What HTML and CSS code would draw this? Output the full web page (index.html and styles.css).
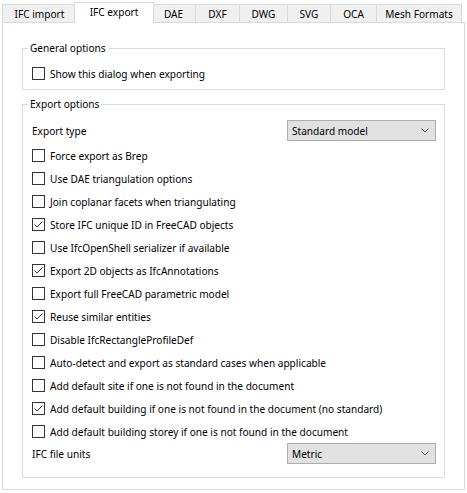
FILE: index.html
```html
<!DOCTYPE html>
<html>
<head>
<meta charset="utf-8">
<link rel="stylesheet" href="styles.css">
</head>
<body>
<div class="tabs">
  <div class="tab t-import">IFC import</div>
  <div class="tab t-export active">IFC export</div>
  <div class="tab t-dae">DAE</div>
  <div class="tab t-dxf">DXF</div>
  <div class="tab t-dwg">DWG</div>
  <div class="tab t-svg">SVG</div>
  <div class="tab t-oca">OCA</div>
  <div class="tab t-mesh">Mesh Formats</div>
</div>
<div class="panel">
  <fieldset class="group general">
    <legend>General options</legend>
    <label class="row"><span class="box"></span>Show this dialog when exporting</label>
  </fieldset>
  <fieldset class="group export">
    <legend>Export options</legend>
    <div class="row combo-row first">
      <span class="label">Export type</span>
      <div class="combo"><span>Standard model</span><svg class="chev" width="8" height="5" viewBox="0 0 8 5"><polyline points="0.5,0.5 4,4 7.5,0.5" fill="none" stroke="#606060" stroke-width="1"/></svg></div>
    </div>
    <label class="row"><span class="box"></span>Force export as Brep</label>
    <label class="row"><span class="box"></span>Use DAE triangulation options</label>
    <label class="row"><span class="box"></span>Join coplanar facets when triangulating</label>
    <label class="row"><span class="box checked"><svg width="11" height="11" viewBox="0 0 11 11"><polyline points="1.5,5.5 4,8 9.5,2.5" fill="none" stroke="#333" stroke-width="1"/></svg></span>Store IFC unique ID in FreeCAD objects</label>
    <label class="row"><span class="box"></span>Use IfcOpenShell serializer if available</label>
    <label class="row"><span class="box checked"><svg width="11" height="11" viewBox="0 0 11 11"><polyline points="1.5,5.5 4,8 9.5,2.5" fill="none" stroke="#333" stroke-width="1"/></svg></span>Export 2D objects as IfcAnnotations</label>
    <label class="row"><span class="box"></span>Export full FreeCAD parametric model</label>
    <label class="row"><span class="box checked"><svg width="11" height="11" viewBox="0 0 11 11"><polyline points="1.5,5.5 4,8 9.5,2.5" fill="none" stroke="#333" stroke-width="1"/></svg></span>Reuse similar entities</label>
    <label class="row"><span class="box"></span>Disable IfcRectangleProfileDef</label>
    <label class="row"><span class="box"></span>Auto-detect and export as standard cases when applicable</label>
    <label class="row"><span class="box"></span>Add default site if one is not found in the document</label>
    <label class="row"><span class="box checked"><svg width="11" height="11" viewBox="0 0 11 11"><polyline points="1.5,5.5 4,8 9.5,2.5" fill="none" stroke="#333" stroke-width="1"/></svg></span>Add default building if one is not found in the document (no standard)</label>
    <label class="row"><span class="box"></span>Add default building storey if one is not found in the document</label>
    <div class="row combo-row last">
      <span class="label">IFC file units</span>
      <div class="combo"><span>Metric</span><svg class="chev" width="8" height="5" viewBox="0 0 8 5"><polyline points="0.5,0.5 4,4 7.5,0.5" fill="none" stroke="#606060" stroke-width="1"/></svg></div>
    </div>
  </fieldset>
</div>
</body>
</html>
```
FILE: styles.css
```css
html, body {
  margin: 0;
  padding: 0;
  background: #ffffff;
}
body {
  font-family: "Noto Sans", "Open Sans", sans-serif;
  font-size: 10.1px;
  color: #000;
  width: 467px;
  height: 493px;
  overflow: hidden;
}
.tabs {
  display: flex;
  align-items: flex-end;
  height: 22px;
  padding-left: 2px;
  box-sizing: border-box;
}
.tab {
  box-sizing: border-box;
  height: 18px;
  border: 1px solid #d9d9d9;
  border-bottom: none;
  background: #f0f0f0;
  margin-left: -1px;
  display: flex;
  align-items: center;
  justify-content: center;
  padding-top: 1px;
  white-space: nowrap;
}
.tab:first-child { margin-left: 0; }
.t-import { width: 75px; }
.t-dae { width: 45px; }
.t-dxf { width: 45px; }
.t-dwg { width: 49px; }
.t-svg { width: 44px; }
.t-oca { width: 47px; }
.t-mesh { width: 86px; }
.tab.active {
  background: #ffffff;
  height: 21px;
  margin-bottom: -1px;
  margin-left: -3px;
  margin-right: -2px;
  width: 80px;
  padding-top: 0;
  padding-bottom: 2px;
  z-index: 2;
}
.panel {
  box-sizing: border-box;
  width: 463px;
  height: 468px;
  margin-left: 2px;
  border: 1px solid #d9d9d9;
  background: #fff;
  padding: 17px 19px 0 19px;
}
.group {
  margin: 0;
  border: 1px solid #dcdcdc;
  padding: 0 8px 0 9px;
  min-inline-size: 0;
}
.group legend {
  padding: 0 2px;
  margin-left: -4px;
  line-height: 16px;
}
.general {
  padding-top: 6px;
  padding-bottom: 4px;
}
.export {
  margin-top: 6px;
  padding-top: 8px;
  padding-bottom: 13px;
}
.row {
  display: flex;
  align-items: center;
  height: 23px;
  white-space: nowrap;
}
.box {
  box-sizing: border-box;
  width: 13px;
  height: 13px;
  border: 1px solid #333;
  background: #fff;
  margin-right: 5px;
  display: flex;
  align-items: center;
  justify-content: center;
  flex: none;
}
.combo-row {
  height: 21px;
  justify-content: space-between;
}
.combo-row.first { margin-bottom: 3px; }
.label {
  padding-left: 0;
}
.combo {
  box-sizing: border-box;
  width: 149px;
  height: 21px;
  border: 1px solid #adadad;
  background: #e1e1e1;
  display: flex;
  align-items: center;
  justify-content: space-between;
  padding: 0 6px 0 4px;
}
.chev { display: block; }
```
